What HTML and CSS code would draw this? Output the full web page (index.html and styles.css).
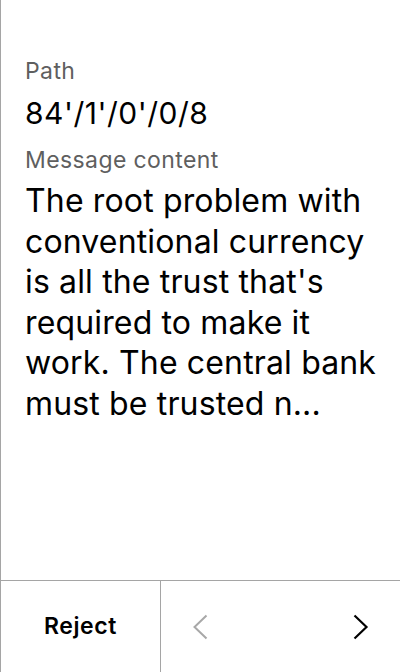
FILE: index.html
```html
<!DOCTYPE html>
<html>
<head>
<meta charset="utf-8">
<link rel="stylesheet" href="styles.css">
</head>
<body>
<div class="screen">
  <main class="content">
    <div class="label">Path</div>
    <div class="path">84'/1'/0'/0/8</div>
    <div class="label msg-label">Message content</div>
    <div class="message">The root problem with conventional currency is all the trust that's required to make it work. The central bank must be trusted n...</div>
  </main>
  <footer class="footer">
    <button class="reject">Reject</button>
    <div class="nav">
      <span class="chev prev">
        <svg width="16" height="26" viewBox="0 0 16 26"><path d="M14.5 1.5 L2.5 13 L14.5 24.5" fill="none" stroke="#a8a8a8" stroke-width="2"/></svg>
      </span>
      <span class="chev next">
        <svg width="16" height="26" viewBox="0 0 16 26"><path d="M1.5 1.5 L13.5 13 L1.5 24.5" fill="none" stroke="#000" stroke-width="2.2"/></svg>
      </span>
    </div>
  </footer>
</div>
</body>
</html>
```
FILE: styles.css
```css
html, body {
  margin: 0;
  padding: 0;
  background: #fff;
}
body {
  font-family: Inter, "Noto Sans", sans-serif;
  color: #000;
}
.screen {
  width: 399px;
  height: 672px;
  border-left: 1px solid #a5a5a5;
  display: flex;
  flex-direction: column;
}
.content {
  flex: 1;
  padding: 57px 20px 0 24px;
}
.label {
  font-size: 23px;
  line-height: 28px;
  letter-spacing: 0.4px;
  color: #5f5f5f;
}
.path {
  font-size: 30px;
  line-height: 36px;
  letter-spacing: 0.5px;
  margin-top: 10px;
}
.msg-label {
  margin-top: 15px;
}
.message {
  font-size: 32px;
  line-height: 40.6px;
  letter-spacing: 0.15px;
  margin-top: 7px;
}
.footer {
  height: 91px;
  border-top: 1px solid #a5a5a5;
  display: flex;
}
.reject {
  width: 160px;
  border: none;
  border-right: 1px solid #a5a5a5;
  background: #fff;
  font-family: Inter, sans-serif;
  font-size: 23px;
  font-weight: 600;
  letter-spacing: 0.6px;
  color: #000;
  padding: 0 0 2px 0;
  margin: 0;
}
.nav {
  flex: 1;
  display: flex;
  align-items: center;
  justify-content: space-between;
  padding: 0 31px 0 31px;
}
.chev {
  display: flex;
}
```
